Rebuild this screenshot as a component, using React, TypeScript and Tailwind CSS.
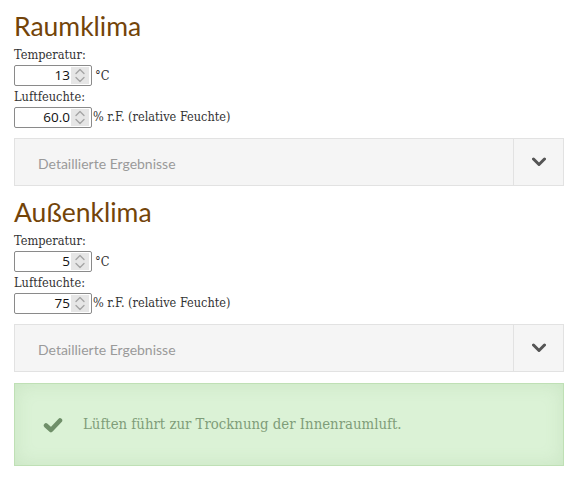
const serif = "font-['DejaVu_Serif_Condensed','DejaVu_Serif',serif]";

/** Number field drawn as a plain box with a Chrome-like spinner. */
function NumberField({ value }: { value: string }) {
  return (
    <div className="flex h-[21px] w-[78px] items-stretch rounded-[2px] border border-[#8a8a8a] bg-white pl-1 pr-[2px] py-[1px]">
      <span className="flex-1 text-right font-['Open_Sans',sans-serif] text-[13.5px] leading-[17px] text-[#111] pr-[1px]">{value}</span>
      <span className="flex w-[18px] items-center justify-center bg-[#e6e6e6]">
        <svg width="12" height="17" viewBox="0 0 12 17">
          <path d="M2 6.5 L6 2.5 L10 6.5 M2 10.5 L6 14.5 L10 10.5" fill="none" stroke="#a3a3a3" strokeWidth="1.3" strokeLinecap="round" strokeLinejoin="round" />
        </svg>
      </span>
    </div>
  );
}

function Section({ title, temp, hum }: { title: string; temp: string; hum: string }) {
  return (
    <div>
      <h2 className="h-[45px] pt-[7px] font-['Lato',sans-serif] text-[26.5px] leading-[39px] text-[#734409]">{title}</h2>
      <div className={`${serif} text-[12.7px] leading-[20px] text-[#333]`}>Temperatur:</div>
      <div className="flex items-center gap-[3px]">
        <NumberField value={temp} />
        <span className={`${serif} text-[12.7px] text-[#333]`}>°C</span>
      </div>
      <div className={`${serif} text-[12.7px] leading-[21px] text-[#333]`}>Luftfeuchte:</div>
      <div className="flex items-center gap-[1px]">
        <NumberField value={hum} />
        <span className={`${serif} text-[12.6px] text-[#333]`}>% r.F. (relative Feuchte)</span>
      </div>
      <div className="mt-[10px] flex h-[48px] border border-[#e2e2e2] bg-[#f5f5f5]">
        <div className="flex flex-1 items-center pl-[23px] pt-[2px] font-['Lato',sans-serif] text-[14px] text-[#9a9a9a]">
          Detaillierte Ergebnisse
        </div>
        <div className="flex w-[50px] items-center justify-center border-l border-[#e2e2e2]">
          <svg width="14" height="10" viewBox="0 0 14 10">
            <path d="M1.5 2 L7 7.5 L12.5 2" fill="none" stroke="#555" strokeWidth="3" strokeLinecap="round" strokeLinejoin="round" />
          </svg>
        </div>
      </div>
    </div>
  );
}

export default function App() {
  return (
    <div className="min-h-[478px] bg-white px-[14px] pr-[12px]">
      <Section title="Raumklima" temp="13" hum="60.0" />
      <Section title="Außenklima" temp="5" hum="75" />
      <div className="mt-[11px] flex h-[83px] items-center border border-[#bfe0b5] bg-[#dbf2d6] pl-[28px] shadow-[inset_0_0_18px_rgba(120,170,110,0.18)]">
        <svg width="20" height="16" viewBox="0 0 20 16" className="mr-[20px]">
          <path d="M3 8.5 L8 13 L17 3.5" fill="none" stroke="#6f8f69" strokeWidth="4.5" strokeLinecap="round" strokeLinejoin="round" />
        </svg>
        <span className={`${serif} text-[14.8px] text-[#7f9d79]`}>Lüften führt zur Trocknung der Innenraumluft.</span>
      </div>
    </div>
  );
}
